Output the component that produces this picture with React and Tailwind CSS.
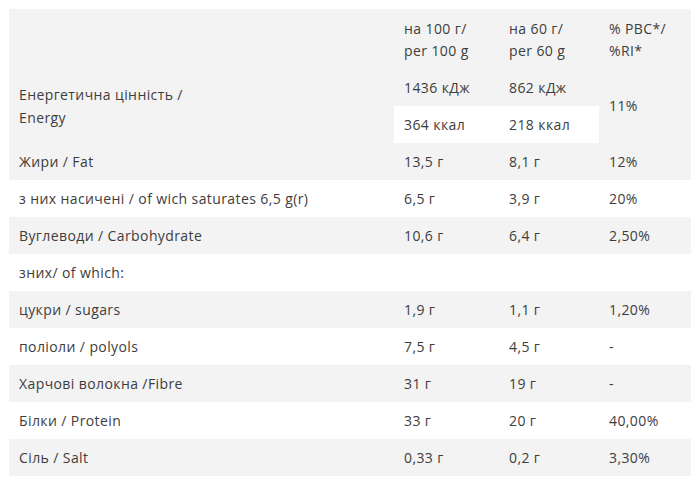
const rows = [
  { label: "Жири / Fat", a: "13,5 г", b: "8,1 г", c: "12%", grey: true },
  { label: "з них насичені / of wich saturates 6,5 g(r)", a: "6,5 г", b: "3,9 г", c: "20%" },
  { label: "Вуглеводи / Carbohydrate", a: "10,6 г", b: "6,4 г", c: "2,50%", grey: true },
  { label: "зних/ of which:", a: "", b: "", c: "" },
  { label: "цукри / sugars", a: "1,9 г", b: "1,1 г", c: "1,20%", grey: true },
  { label: "поліоли / polyols", a: "7,5 г", b: "4,5 г", c: "-" },
  { label: "Харчові волокна /Fibre", a: "31 г", b: "19 г", c: "-", grey: true },
  { label: "Білки / Protein", a: "33 г", b: "20 г", c: "40,00%" },
  { label: "Сіль / Salt", a: "0,33 г", b: "0,2 г", c: "3,30%", grey: true },
];

export default function App() {
  return (
    <div className="w-[700px] h-[485px] bg-white p-[9px] font-['Open_Sans',sans-serif] text-[14px] leading-[22px] tracking-[0.4px] text-[#3d3d3d]">
      <table className="w-[682px] border-collapse table-fixed">
        <colgroup>
          <col className="w-[385px]" />
          <col className="w-[105px]" />
          <col className="w-[100px]" />
          <col className="w-[92px]" />
        </colgroup>
        <tbody>
          <tr className="bg-[#f3f3f3] h-[61px]">
            <td className="px-[10px]"></td>
            <td className="px-[10px] align-middle">
              на 100 г/<br />per 100 g
            </td>
            <td className="px-[10px] align-middle">
              на 60 г/<br />per 60 g
            </td>
            <td className="px-[10px] align-middle">
              % РВС*/<br />%RI*
            </td>
          </tr>
          <tr className="bg-[#f3f3f3] h-[36px]">
            <td rowSpan={2} className="px-[10px] pb-[2px] leading-[23px] align-middle">
              Енергетична цінність /<br />Energy
            </td>
            <td className="px-[10px]">1436 кДж</td>
            <td className="px-[10px]">862 кДж</td>
            <td rowSpan={2} className="px-[10px] pb-[2px] align-middle">11%</td>
          </tr>
          <tr className="h-[37px]">
            <td className="px-[10px] bg-white">364 ккал</td>
            <td className="px-[10px] bg-white">218 ккал</td>
          </tr>
          {rows.map((r, i) => (
            <tr key={i} className={r.grey ? "bg-[#f3f3f3] h-[37px]" : "bg-white h-[37px]"}>
              <td className="px-[10px] whitespace-nowrap">{r.label}</td>
              <td className="px-[10px]">{r.a}</td>
              <td className="px-[10px]">{r.b}</td>
              <td className="px-[10px]">{r.c}</td>
            </tr>
          ))}
        </tbody>
      </table>
    </div>
  );
}
